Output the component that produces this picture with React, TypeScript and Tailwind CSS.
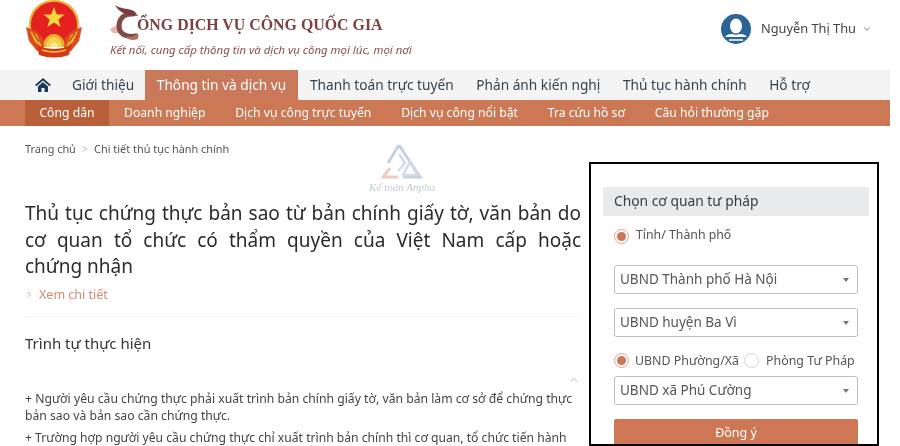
import React from "react";
import { ChevronDown, ChevronRight, ChevronUp } from "lucide-react";

const navItems = ["Thanh toán trực tuyến", "Phản ánh kiến nghị", "Thủ tục hành chính", "Hỗ trợ"];
const subItems = ["Doanh nghiệp", "Dịch vụ công trực tuyến", "Dịch vụ công nổi bật", "Tra cứu hồ sơ", "Câu hỏi thường gặp"];

const Emblem = () => (
  <svg width="58" height="58" viewBox="0 0 58 58" className="block">
    {/* gold rim */}
    <path d="M29 0 C44 0 54 11 54 24 C54 28 53 31 52 33 L7 33 C5 31 4 28 4 24 C4 11 14 0 29 0 Z" fill="#e8ae35" />
    <path d="M29 2 C42 2 52 12 52 25 C52 36 45 47 29 47 C13 47 6 36 6 25 C6 12 16 2 29 2 Z" fill="#e5211f" />
    {/* star */}
    <polygon points="29,7 31.8,14.6 39.6,14.6 33.4,19.4 35.6,27 29,22.4 22.4,27 24.6,19.4 18.4,14.6 26.2,14.6" fill="#f8d83e" />
    {/* cog wheel */}
    <path d="M18 47 a11 13 0 0 1 22 0 z" fill="#e8b030" />
    <path d="M21 47 a8 10 0 0 1 16 0 z" fill="#f3d24a" />
    <path d="M25 47 a4 5 0 0 1 8 0 z" fill="#f8ea8c" />
    {/* wreath sides */}
    <path d="M1 27 L11 31 L18 38 L19 49 L12 51 L4 41 Z" fill="#dc4a1e" />
    <path d="M57 27 L47 31 L40 38 L39 49 L46 51 L54 41 Z" fill="#dc4a1e" />
    <path d="M5 31 L12 35 L17 47 L10 42 Z" fill="#eeb72e" />
    <path d="M53 31 L46 35 L41 47 L48 42 Z" fill="#eeb72e" />
    <path d="M8 33 L14 42 M50 33 L44 42" stroke="#b8301a" strokeWidth="1.2" />
    {/* ribbon */}
    <path d="M12 46 Q29 52 46 46 L44 55 Q29 60 14 55 Z" fill="#d8351f" />
    <path d="M17 50 Q29 54 41 50" stroke="#efc63a" strokeWidth="1.5" fill="none" />
  </svg>
);

const DragonMark = () => (
  <svg width="30" height="36" viewBox="0 0 30 36" className="block">
    {/* clouds behind the letter */}
    <path d="M0 25 C2 21 5 22 7 20 L12 20 L12 28 L3 28 Z" fill="#e3b8a8" />
    {/* dragon body forming the C */}
    <path d="M23 9 C14 8 9 14 9 21 C9 28 15 33 26 31" stroke="#7d4a47" strokeWidth="5" fill="none" strokeLinecap="round" />
    <path d="M5 0 C10 4 17 3 24 6 L28 11 L20 10 C14 9 8 6 5 0 Z" fill="#7d3a3c" />
    <path d="M15 31 C19 33 24 32 28 28 L28 34 C22 36 18 35 15 31 Z" fill="#b5705f" />
  </svg>
);

const UserAvatar = () => (
  <svg width="30" height="30" viewBox="0 0 30 30" className="block">
    <circle cx="15" cy="15" r="15" fill="#2a6496" />
    <ellipse cx="15" cy="12" rx="6" ry="7.5" fill="#fff" />
    <path d="M4 23 C8 19 11 20 15 21 C19 20 22 19 26 23 L15 23 Z" fill="#fff" />
    <path d="M8 26 H22" stroke="#fff" strokeWidth="1.5" />
  </svg>
);

const Watermark = () => (
  <div className="absolute left-[346px] top-[17px] flex w-[62px] flex-col items-center opacity-50">
    <svg width="42" height="36" viewBox="0 0 42 36" className="block">
      <path d="M18 2 L39 34 H22 M18 2 L7 20" fill="none" stroke="#8fa3c9" strokeWidth="3" />
      <path d="M29 19 L36 32 H22 Z" fill="none" stroke="#a9b8d6" strokeWidth="2.5" />
      <path d="M18 11 L24 20 L17 28" fill="none" stroke="#a9b8d6" strokeWidth="2.5" />
      <path d="M9 25 L2 34 H17" fill="none" stroke="#e39b83" strokeWidth="3" />
    </svg>
    <span className="mt-[2px] whitespace-nowrap font-['Liberation_Serif',serif] text-[11px] italic leading-[13px] text-[#8a8fa0]">Kế toán Anpha</span>
  </div>
);

const Radio = ({ on }: { on: boolean }) => (
  <span className={`flex h-[15px] w-[15px] shrink-0 items-center justify-center rounded-full border bg-white ${on ? "border-[#e0a48f]" : "border-gray-300"}`}>
    {on && <span className="h-[9px] w-[9px] rounded-full bg-[#cd7656]" />}
  </span>
);

const FakeSelect = ({ label }: { label: string }) => (
  <div className="flex h-[29px] items-center justify-between rounded-[3px] border border-[#bdbdbd] bg-white pl-[5px] pr-[8px] text-[13.5px] text-[#555]">
    <span>{label}</span>
    <span className="h-0 w-0 border-x-[3px] border-t-[4px] border-x-transparent border-t-[#777]" />
  </div>
);

export default function App() {
  return (
    <div className="h-[446px] w-[900px] overflow-hidden bg-white font-['Noto_Sans',sans-serif] text-[#333] blur-[0.4px]">
      {/* Header */}
      <header className="flex h-[70px] items-start">
        <div className="ml-[25px]"><Emblem /></div>
        <div className="ml-[27px]">
          <div className="mt-[5px] flex items-center">
            <DragonMark />
            <span className="ml-[-3px] mt-[4px] font-['Liberation_Serif',serif] text-[15.9px] font-bold text-[#7e3f42]">ỔNG DỊCH VỤ CÔNG QUỐC GIA</span>
          </div>
          <p className="mt-[1px] text-[11.4px] italic leading-[16px] text-[#8a4f52]">Kết nối, cung cấp thông tin và dịch vụ công mọi lúc, mọi nơi</p>
        </div>
        <div className="ml-auto mr-[28px] mt-[14px] flex items-center">
          <UserAvatar />
          <span className="ml-[10px] text-[12.8px] text-[#444]">Nguyễn Thị Thu</span>
          <ChevronDown className="ml-[6px] h-[10px] w-[10px] text-[#555]" />
        </div>
      </header>

      {/* Main nav */}
      <nav className="mr-[10px] flex h-[30px] items-center bg-[#f4f4f4] text-[13.7px] text-[#35424f]">
        <svg width="16" height="14" viewBox="0 0 16 14" className="ml-[35px]">
          <path d="M8 0 L16 7 L14.5 8.2 L8 2.6 L1.5 8.2 L0 7 Z" fill="#1d3b58" />
          <path d="M3 8.4 L8 4 L13 8.4 V14 H9.5 V10 H6.5 V14 H3 Z" fill="#1d3b58" />
        </svg>
        <span className="ml-[21px] w-[73px]">Giới thiệu</span>
        <span className="flex h-full w-[153px] items-center justify-center bg-[#c9785a] text-white">Thông tin và dịch vụ</span>
        <div className="ml-[12px] flex gap-[22.6px]">
          {navItems.map((item) => (
            <span key={item}>{item}</span>
          ))}
        </div>
      </nav>

      {/* Sub nav */}
      <div className="mr-[10px] flex h-[26px] items-center bg-[#cc7855] text-[12.2px] text-white">
        <span className="ml-[25px] flex h-full w-[84px] items-center justify-center bg-[#b95f3a]">Công dân</span>
        <div className="ml-[15px] flex gap-[29.8px]">
          {subItems.map((item) => (
            <span key={item}>{item}</span>
          ))}
        </div>
      </div>

      <div className="flex">
        {/* Left column */}
        <main className="relative ml-[25px] w-[556px]">
          <div className="mt-[15px] flex items-center text-[10.9px] leading-[15px] text-[#555]">
            <span>Trang chủ</span>
            <span className="mx-[6px] text-[#bbb]">&gt;</span>
            <span>Chi tiết thủ tục hành chính</span>
          </div>
          <Watermark />
          <h1 className="mt-[44px] text-[19px] leading-[26.5px] text-[#2b2b2b]">
            <span className="block text-justify [text-align-last:justify]">
              Thủ tục chứng thực bản sao từ bản chính giấy tờ, văn bản do cơ quan tổ chức có thẩm quyền của Việt Nam cấp hoặc
            </span>
            <span className="block">chứng nhận</span>
          </h1>
          <div className="mt-[6px] flex items-center text-[12.5px] leading-[17px] text-[#d58a70]">
            <ChevronRight className="h-[9px] w-[9px]" />
            <span className="ml-[5px]">Xem chi tiết</span>
          </div>
          <div className="mt-[13px] h-px bg-[#f1f1f1]" />
          <h2 className="mt-[16px] text-[15px] leading-[20px] text-[#333]">Trình tự thực hiện</h2>
          <div className="mt-[21px] flex justify-end pr-[1px]">
            <ChevronUp className="h-[12px] w-[12px] text-[#bbb]" />
          </div>
          <p className="mt-[4px] text-[12.2px] leading-[17px] text-[#444]">
            + Người yêu cầu chứng thực phải xuất trình bản chính giấy tờ, văn bản làm cơ sở để chứng thực bản sao và bản sao cần chứng thực.
          </p>
          <p className="mt-[5px] whitespace-nowrap text-[12.15px] leading-[17px] text-[#444]">
            + Trường hợp người yêu cầu chứng thực chỉ xuất trình bản chính thì cơ quan, tổ chức tiến hành
          </p>
        </main>

        {/* Right panel */}
        <aside className="ml-[8px] mt-[36px] h-[284px] w-[290px] border-2 border-black bg-white">
          <div className="ml-[12px] mt-[23px] w-[266px]">
            <div className="flex h-[29px] items-center rounded-t-[2px] bg-[#e9eaec] pl-[11px] text-[13.8px] text-[#3a3a3a]">Chọn cơ quan tư pháp</div>
            <div className="px-[11px]">
              <div className="mt-[13px] flex items-center gap-[7px] text-[12.3px] leading-[17px] text-[#555]">
                <Radio on />
                <span className="mt-[-4px]">Tỉnh/ Thành phố</span>
              </div>
              <div className="mt-[21px]"><FakeSelect label="UBND Thành phố Hà Nội" /></div>
              <div className="mt-[14px]"><FakeSelect label="UBND huyện Ba Vì" /></div>
              <div className="mt-[15px] flex items-center whitespace-nowrap text-[12.4px] leading-[17px] text-[#555]">
                <Radio on />
                <span className="ml-[6px] w-[109px]">UBND Phường/Xã</span>
                <Radio on={false} />
                <span className="ml-[7px]">Phòng Tư Pháp</span>
              </div>
              <div className="mt-[7px]"><FakeSelect label="UBND xã Phú Cường" /></div>
              <div className="mt-[14px] flex h-[25px] items-center justify-center rounded-t-[2px] bg-[#cd7755] pt-[3px] text-[12.5px] text-white">Đồng ý</div>
            </div>
          </div>
        </aside>
      </div>
    </div>
  );
}
